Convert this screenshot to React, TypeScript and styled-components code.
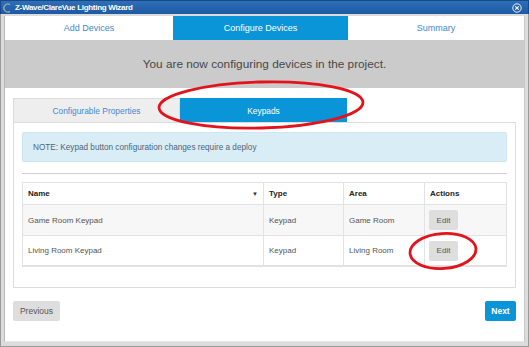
import React from "react";
import styled, { createGlobalStyle } from "styled-components";

const Global = createGlobalStyle`
  html, body { margin: 0; padding: 0; background: #ffffff; }
  * { box-sizing: border-box; }
`;

const Window = styled.div`
  position: relative;
  width: 529px;
  height: 347px;
  display: flex;
  flex-direction: column;
  font-family: "Liberation Sans", Arial, sans-serif;
  background: #ffffff;
  overflow: hidden;
`;

const TitleBar = styled.div`
  height: 14px;
  flex: none;
  display: flex;
  align-items: center;
  padding: 0 6px 0 2px;
  background: linear-gradient(#2f6fb6, #1c5aa3);
  border: 1px solid #17498a;
  border-bottom: none;
`;

const Title = styled.span`
  flex: 1;
  margin-left: 3px;
  color: #ffffff;
  font-weight: bold;
  font-size: 8px;
  letter-spacing: -0.3px;
  line-height: 14px;
`;

const Frame = styled.div`
  flex: 1;
  display: flex;
  padding: 2px 3px 4px 3px;
  background: #dcdcdc;
  border: 1px solid #9a9a9a;
  border-top: none;
`;

const Inner = styled.div`
  flex: 1;
  display: flex;
  flex-direction: column;
  background: #ffffff;
  border-left: 1px solid #b8b8b8;
  border-right: 1px solid #c8c8c8;
  border-bottom: 1px solid #e6e6e6;
`;

const StepTabs = styled.div`
  display: flex;
  height: 24px;
`;

const StepTab = styled.div<{ $active?: boolean; $w?: number }>`
  ${(p) => (p.$w ? `width: ${p.$w}px; flex: none;` : "flex: 1;")}
  display: flex;
  align-items: center;
  justify-content: center;
  font-size: 9px;
  color: ${(p) => (p.$active ? "#ffffff" : "#3e8ad0")};
  background: ${(p) => (p.$active ? "#0b95d9" : "#ffffff")};
`;

const Banner = styled.div`
  height: 48px;
  display: flex;
  align-items: center;
  justify-content: center;
  background: #cbcbcb;
  color: #484848;
  font-size: 11.8px;
`;

const Content = styled.div`
  flex: 1;
  display: flex;
  flex-direction: column;
  padding: 10px 8px 0 8px;
`;

const SubTabs = styled.div`
  display: flex;
  height: 24px;
`;

const SubTab = styled.div<{ $active?: boolean }>`
  width: 167px;
  display: flex;
  align-items: center;
  justify-content: center;
  font-size: 8.4px;
  color: ${(p) => (p.$active ? "#ffffff" : "#3e8ad0")};
  background: ${(p) => (p.$active ? "#0b95d9" : "#eeeeee")};
  border: 1px solid ${(p) => (p.$active ? "#0b95d9" : "#dddddd")};
  border-bottom: none;
`;

const Panel = styled.div`
  height: 166px;
  display: flex;
  flex-direction: column;
  padding: 9px 8px 0 8px;
  border: 1px solid #dddddd;
`;

const Note = styled.div`
  height: 30px;
  display: flex;
  align-items: center;
  padding-left: 10px;
  background: #d9edf7;
  border: 1px solid #cfe6f1;
  border-radius: 2px;
  color: #4e6478;
  font-size: 8.2px;
`;

const Divider = styled.div`
  margin-top: 11px;
  height: 1px;
  background: #cfcfcf;
`;

const Table = styled.div`
  margin-top: 8px;
  display: grid;
  grid-template-columns: 241px 80px 81px 1fr;
  border: 1px solid #e2e2e2;
`;

const Cell = styled.div<{ $head?: boolean; $stripe?: boolean; $h: number; $last?: boolean }>`
  height: ${(p) => p.$h}px;
  display: flex;
  align-items: center;
  padding-left: 5px;
  font-size: 8px;
  color: ${(p) => (p.$head ? "#222222" : "#555555")};
  font-weight: ${(p) => (p.$head ? "bold" : "normal")};
  background: ${(p) => (p.$stripe ? "#f7f7f7" : "#ffffff")};
  border-right: ${(p) => (p.$last ? "none" : "1px solid #e2e2e2")};
  border-bottom: 1px solid #e2e2e2;
`;

const HeadName = styled.span`
  flex: 1;
`;

const Caret = styled.span`
  margin-right: 5px;
  font-size: 6px;
  color: #333333;
`;

const EditButton = styled.button`
  width: 29px;
  height: 20px;
  padding: 0;
  margin-left: -1px;
  border: none;
  border-radius: 2px;
  background: #dedede;
  color: #555555;
  font-family: "Liberation Sans", Arial, sans-serif;
  font-size: 8px;
`;

const Footer = styled.div`
  display: flex;
  justify-content: space-between;
  margin-top: 13px;
`;

const NavButton = styled.button<{ $primary?: boolean }>`
  height: 20px;
  padding: 0 6px;
  border: none;
  border-radius: 2px;
  font-family: "Liberation Sans", Arial, sans-serif;
  font-size: 8.5px;
  font-weight: ${(p) => (p.$primary ? "bold" : "normal")};
  color: ${(p) => (p.$primary ? "#ffffff" : "#555555")};
  background: ${(p) => (p.$primary ? "#0b95d9" : "#dedede")};
  width: ${(p) => (p.$primary ? 31 : 47)}px;
`;

const Overlay = styled.svg`
  position: absolute;
  left: 0;
  top: 0;
  pointer-events: none;
`;

const rows = [
  { name: "Game Room Keypad", type: "Keypad", area: "Game Room", h: 31 },
  { name: "Living Room Keypad", type: "Keypad", area: "Living Room", h: 30 },
];

export default function App() {
  return (
    <>
      <Global />
      <Window>
        <TitleBar>
          <svg width="9" height="10" viewBox="0 0 9 10">
            <path d="M7 1.6 A4 4 0 1 0 7 8.4" fill="none" stroke="#9aa6b4" strokeWidth="1.4" />
          </svg>
          <Title>Z-Wave/ClareVue Lighting Wizard</Title>
          <svg width="10" height="10" viewBox="0 0 10 10">
            <circle cx="5" cy="5" r="4.2" fill="none" stroke="#ffffff" strokeWidth="0.9" />
            <path d="M3.3 3.3 L6.7 6.7 M6.7 3.3 L3.3 6.7" stroke="#ffffff" strokeWidth="1.1" />
          </svg>
        </TitleBar>
        <Frame>
          <Inner>
            <StepTabs>
              <StepTab $w={168}>Add Devices</StepTab>
              <StepTab $w={175} $active>Configure Devices</StepTab>
              <StepTab>Summary</StepTab>
            </StepTabs>
            <Banner>You are now configuring devices in the project.</Banner>
            <Content>
              <SubTabs>
                <SubTab>Configurable Properties</SubTab>
                <SubTab $active>Keypads</SubTab>
              </SubTabs>
              <Panel>
                <Note>NOTE: Keypad button configuration changes require a deploy</Note>
                <Divider />
                <Table>
                  <Cell $head $h={22}>
                    <HeadName>Name</HeadName>
                    <Caret>▼</Caret>
                  </Cell>
                  <Cell $head $h={22}>Type</Cell>
                  <Cell $head $h={22}>Area</Cell>
                  <Cell $head $h={22} $last>Actions</Cell>
                  {rows.map((r, i) => (
                    <React.Fragment key={r.name}>
                      <Cell $h={r.h} $stripe={i === 0}>{r.name}</Cell>
                      <Cell $h={r.h} $stripe={i === 0}>{r.type}</Cell>
                      <Cell $h={r.h} $stripe={i === 0}>{r.area}</Cell>
                      <Cell $h={r.h} $stripe={i === 0} $last>
                        <EditButton>Edit</EditButton>
                      </Cell>
                    </React.Fragment>
                  ))}
                </Table>
              </Panel>
              <Footer>
                <NavButton>Previous</NavButton>
                <NavButton $primary>Next</NavButton>
              </Footer>
            </Content>
          </Inner>
        </Frame>
        <Overlay width="529" height="347" viewBox="0 0 529 347">
          <ellipse cx="261" cy="105" rx="102" ry="23" fill="none" stroke="#e3131b" strokeWidth="2.8" transform="rotate(-1.5 261 105)" />
          <ellipse cx="443" cy="251" rx="33" ry="17.5" fill="none" stroke="#e3131b" strokeWidth="2.8" transform="rotate(-4 443 251)" />
        </Overlay>
      </Window>
    </>
  );
}
